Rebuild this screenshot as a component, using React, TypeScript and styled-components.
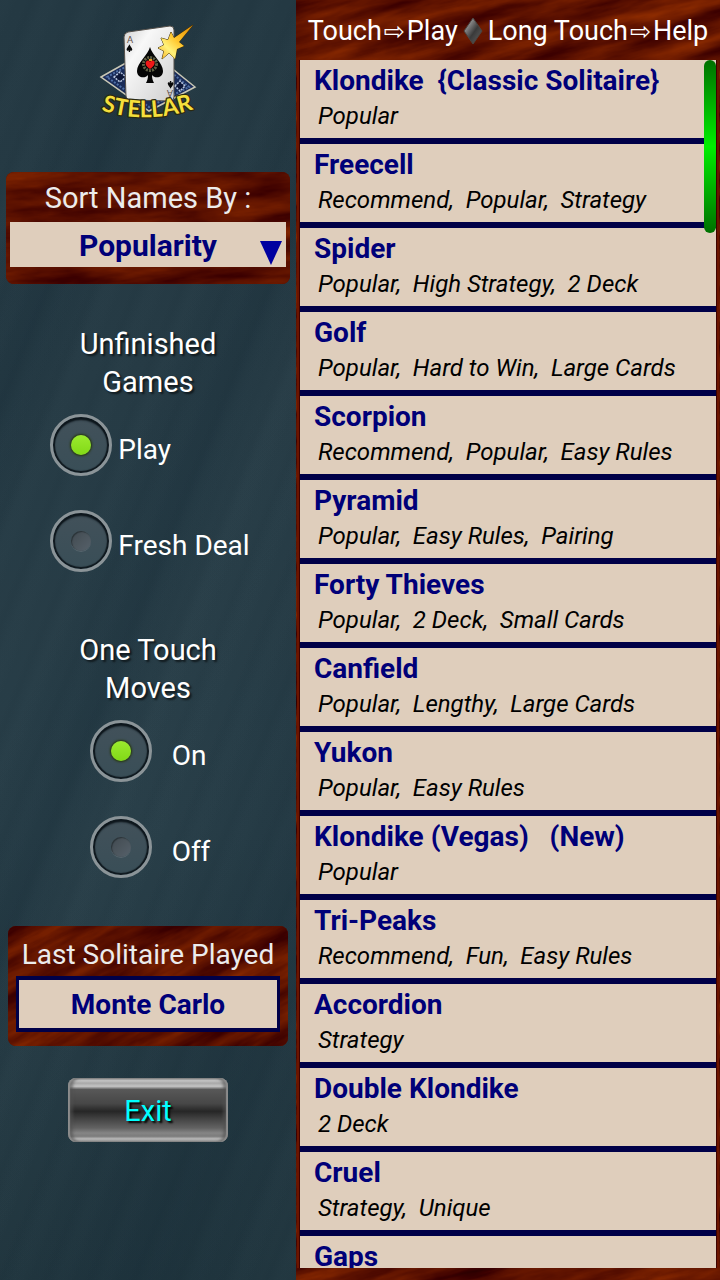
import React, { useState } from 'react';
import styled, { createGlobalStyle } from 'styled-components';

const GlobalStyle = createGlobalStyle`
  *, *::before, *::after { box-sizing: border-box; }
  body {
    margin: 0;
    background: #243943;
    font-family: Roboto, "Liberation Sans", sans-serif;
  }
  button, select { font: inherit; }
`;

const color = {
  cream: '#dfcebc',
  navy: '#000078',
  line: '#000048',
  label: '#ececec',
};

const Screen = styled.div`
  display: grid;
  grid-template-columns: 37fr 53fr;
  height: 100vh;
  overflow: hidden;
`;

const Sidebar = styled.aside`
  display: flex;
  flex-direction: column;
  align-items: center;
  min-width: 0;
  padding: 10px 6px;
  background:
    linear-gradient(112deg, transparent 12%, rgba(14, 34, 46, 0.2) 20%, transparent 27%, transparent 38%, rgba(14, 34, 46, 0.18) 47%, rgba(70, 92, 100, 0.06) 54%, transparent 62%, rgba(14, 34, 46, 0.22) 82%, transparent 96%),
    repeating-linear-gradient(112deg, rgba(80, 104, 114, 0.03) 0 7px, transparent 16px 23px, rgba(12, 28, 38, 0.04) 30px, rgba(80, 104, 114, 0.03) 41px),
    linear-gradient(180deg, #243943 0%, #263b45 30%, #283e48 65%, #21363f 100%);
`;

const Logo = styled.svg`
  display: block;
  flex: none;
  width: 120px;
  height: 120px;
`;

const WoodLayer = styled.svg`
  position: absolute;
  inset: 0;
  z-index: -1;
  width: 100%;
  height: 100%;
`;

const WoodPanel = styled.section<{ $inset: number; $top: number }>`
  position: relative;
  isolation: isolate;
  flex: none;
  align-self: stretch;
  display: flex;
  flex-direction: column;
  margin: ${p => p.$top}px ${p => p.$inset}px 0;
  border-radius: 8px;
  overflow: hidden;
  background: #5a1000;
`;

const PanelTitle = styled.label`
  display: block;
  padding-top: 2px;
  line-height: 48px;
  font-size: 29px;
  text-align: center;
  white-space: nowrap;
  color: ${color.label};
`;

const LastTitle = styled.h2`
  margin: 0;
  padding-top: 8px;
  line-height: 42px;
  font-size: 28px;
  font-weight: 400;
  text-align: center;
  white-space: nowrap;
  color: ${color.label};
`;

const SelectWrap = styled.div`
  position: relative;
  margin: 0 4px 17px;
`;

const SortSelect = styled.select`
  appearance: none;
  display: block;
  width: 100%;
  height: 45px;
  padding: 2px 0 0;
  border: 0;
  border-radius: 0;
  background: ${color.cream};
  color: ${color.navy};
  font-size: 30px;
  font-weight: 700;
  text-align: center;
  text-align-last: center;
`;

const SelectArrow = styled.svg`
  position: absolute;
  right: 4px;
  bottom: 2px;
  width: 22px;
  height: 24px;
  pointer-events: none;
`;

const LastButton = styled.button`
  height: 56px;
  margin: 0 8px 14px;
  padding: 0;
  border: solid ${color.line};
  border-width: 4px 3px;
  background: ${color.cream};
  color: ${color.navy};
  font-size: 28px;
  font-weight: 700;
`;

const Group = styled.fieldset<{ $top: number }>`
  flex: none;
  margin: ${p => p.$top}px 0 0;
  padding: 0;
  border: 0;
`;

const GroupTitle = styled.legend`
  width: 160px;
  margin: 0 auto 13px;
  padding: 0;
  line-height: 38px;
  font-size: 29px;
  text-align: center;
  color: #fff;
  text-shadow: 2px 2px 2px rgba(0, 0, 0, 0.6);
`;

const Options = styled.div`
  display: grid;
  justify-content: center;
  gap: 34px;
  padding-left: 4px;
`;

const Option = styled.label<{ $gap: number }>`
  display: flex;
  align-items: center;
  gap: ${p => p.$gap}px;
  font-size: 28px;
  color: #fff;
  white-space: nowrap;
`;

const OptionText = styled.span`
  padding-top: 8px;
`;

const Radio = styled.input`
  appearance: none;
  display: grid;
  place-items: center;
  width: 62px;
  height: 62px;
  margin: 0;
  border-radius: 50%;
  border: 3px solid #8b9498;
  background: linear-gradient(#42515a, #394e57) padding-box;
  box-shadow: inset 0 0 1px 2px #0e171d, inset 0 3px 2px #0e171d;

  &::before {
    content: "";
    width: 20px;
    height: 20px;
    border-radius: 50%;
    background: linear-gradient(135deg, #414a50, #56616a);
    box-shadow: inset 1px 1px 1px #2a3338, 0 1px 0 #56656d;
  }

  &:checked::before {
    background: linear-gradient(#9bea2e, #82d917);
    box-shadow: 0 0 2px 1px #28390f;
  }
`;

const ExitButton = styled.button`
  flex: none;
  width: 160px;
  height: 64px;
  margin-top: 32px;
  padding: 2px 0 0;
  border: 0;
  border-radius: 8px;
  background: linear-gradient(#9a9a9a 0, #c6c6c6 4%, #a8a8a8 8%, #c4c4c4 13%, #585858 18%, #505050 28%, #474747 40%, #262626 52%, #484848 66%, #626262 78%, #858585 86%, #7c7c7c 91%, #b8b8b8 95%, #a4a4a4 100%);
  box-shadow: inset 2px 0 1px #8c8c8c, inset -2px 0 1px #8c8c8c, inset 5px 0 3px rgba(80, 80, 80, 0.6), inset -5px 0 3px rgba(80, 80, 80, 0.6);
  color: #00ffff;
  font-size: 29px;
  text-shadow: 2px 2px 2px #000;
`;

const Main = styled.main`
  position: relative;
  isolation: isolate;
  display: flex;
  flex-direction: column;
  min-width: 0;
  min-height: 0;
  padding: 0 4px 12px;
  background: #5c1200;
`;

const Hint = styled.header`
  display: flex;
  align-items: center;
  justify-content: center;
  gap: 5px;
  height: 60px;
  padding-top: 2px;
  flex: none;
  margin: 0 -4px;
  font-size: 27px;
  white-space: nowrap;
  color: #fff;
`;

const Arrow = styled.span`
  font-family: "DejaVu Sans", sans-serif;
  font-size: 25px;
  margin: 0 2px;
`;

const Diamond = styled.svg`
  width: 20px;
  height: 28px;
`;

const ListFrame = styled.div`
  position: relative;
  flex: 1;
  min-height: 0;
  box-shadow: 0 0 0 1px #3c0200, 0 0 0 3px #6c1500;
  clip-path: inset(0 -4px 0 -4px);
`;

const GameList = styled.ul`
  height: 100%;
  margin: 0;
  padding: 0;
  overflow-y: auto;
  list-style: none;
  scrollbar-width: none;
  background: ${color.cream};
`;

const GameRow = styled.li`
  border-bottom: 6px solid ${color.line};
`;

const GameButton = styled.button`
  display: flex;
  flex-direction: column;
  width: 100%;
  height: 78px;
  padding: 4px 14px 0;
  border: 0;
  background: none;
  text-align: left;
  white-space: pre;
`;

const GameName = styled.span`
  line-height: 34px;
  font-size: 28px;
  font-weight: 700;
  color: ${color.navy};
`;

const GameTags = styled.span`
  padding-left: 4px;
  line-height: 36px;
  font-size: 24px;
  font-style: italic;
  color: #000;
`;

const ScrollThumb = styled.div`
  position: absolute;
  top: 0;
  right: 0;
  width: 12px;
  height: 173px;
  border-radius: 6px;
  background: linear-gradient(#007000, #00ee00 50%, #007000);
`;

function Wood({ id, seed, tilt }: { id: string; seed: number; tilt: number }) {
  return (
    <WoodLayer aria-hidden="true">
      <defs>
        <filter id={id} x="0" y="0" width="100%" height="100%" colorInterpolationFilters="sRGB">
          <feTurbulence type="fractalNoise" baseFrequency="0.01 0.055" numOctaves="5" seed={seed} />
          <feColorMatrix values="0.45 0 0 0 0.14  0.24 0 0 0 -0.05  0 0 0 0 0  0 0 0 0 1" />
        </filter>
      </defs>
      <g transform={`rotate(${tilt})`}>
        <rect x="-600" y="-400" width="1800" height="2400" filter={`url(#${id})`} />
      </g>
    </WoodLayer>
  );
}

function StellarLogo() {
  const spade =
    'M61 37 C63 45 74 53 74 61 C74 68 66 69 63 65 C63 69 64 71 65 73 L57 73 C58 71 59 69 59 65 C56 69 48 68 48 61 C48 53 59 45 61 37 Z';
  return (
    <Logo viewBox="-1 0 120 120" role="img" aria-label="Stellar">
      <defs>
        <linearGradient id="card" x1="0" y1="0" x2="1" y2="1">
          <stop offset="0" stopColor="#d0d0d0" />
          <stop offset="0.3" stopColor="#f8f8f8" />
          <stop offset="1" stopColor="#cfcfcf" />
        </linearGradient>
        <linearGradient id="flare" x1="1" y1="0" x2="0" y2="1">
          <stop offset="0" stopColor="#e08a00" />
          <stop offset="0.45" stopColor="#ffc52c" />
          <stop offset="0.7" stopColor="#fff27a" />
          <stop offset="1" stopColor="#f7a818" />
        </linearGradient>
        <path id="nameArc" d="M12 100 Q59 116 111 97" />
      </defs>
      <path d="M12 67 L60 40 L106 77 L60 101 Z" fill="#1a2c59" stroke="#c9c7b5" strokeWidth="1.5" />
      <path d="M18 67 L60 44 L100 77 L60 97 Z" fill="none" stroke="#4f6fa6" strokeWidth="2" strokeDasharray="2 1.5" />
      <path d="M25 67 l6 -5 6 5 -6 5 Z M86 76 l5 -5 5 5 -5 5 Z" fill="#0c1638" stroke="#b8c6df" strokeWidth="1.5" strokeDasharray="2 1" />
      <path d="M39 22 Q35 23 35 27 L37 86 Q37 90 41 90 L81 91 Q85 91 85 87 L85 20 Q85 16 81 16 Z" fill="url(#card)" stroke="#55504a" strokeWidth="1" />
      <path d={spade} fill="#050505" />
      <circle cx="61" cy="54" r="6.5" fill="none" stroke="#5f6045" strokeWidth="3" strokeDasharray="2 1" />
      <path d="M61 59 C57 56 56 54 57 52 C58 50 60 50 61 52 C62 50 65 50 65.500 52 C66 54 65 56 61 59 Z" fill="#f01818" />
      <path d="M60 49 h3 v2 h-3 Z" fill="#e39a20" />
      <text x="38" y="33" fontFamily="Lato, sans-serif" fontSize="9" fill="#5b4a44">A</text>
      <g transform="translate(27 26) scale(0.22)"><path d={spade} fill="#080808" /></g>
      <g transform="translate(95 87) rotate(180) scale(0.22)"><path d={spade} fill="#080808" /></g>
      <g transform="translate(84 80) rotate(180)">
        <text x="0" y="0" fontFamily="Lato, sans-serif" fontSize="9" fill="#5b4a44">A</text>
      </g>
      <path
        d="M104 15 L90 32 L95 36 L88 39 L86 49 L80 43 L73 49 L75 41 L69 38 L75 35 L72 28 L79 30 L82 22 L85 28 Z"
        fill="url(#flare)"
        stroke="#3a2a08"
        strokeWidth="1"
        strokeLinejoin="round"
        paintOrder="stroke"
      />
      <text
        fontFamily="Lato, sans-serif"
        fontSize="23"
        fontWeight="700"
        fill="#f5df3c"
        stroke="#2b2a10"
        strokeWidth="2.500"
        strokeLinejoin="round"
        paintOrder="stroke"
      >
        <textPath href="#nameArc">STELLAR</textPath>
      </text>
    </Logo>
  );
}

const games: [string, string[]][] = [
  ['Klondike  {Classic Solitaire}', ['Popular']],
  ['Freecell', ['Recommend', 'Popular', 'Strategy']],
  ['Spider', ['Popular', 'High Strategy', '2 Deck']],
  ['Golf', ['Popular', 'Hard to Win', 'Large Cards']],
  ['Scorpion', ['Recommend', 'Popular', 'Easy Rules']],
  ['Pyramid', ['Popular', 'Easy Rules', 'Pairing']],
  ['Forty Thieves', ['Popular', '2 Deck', 'Small Cards']],
  ['Canfield', ['Popular', 'Lengthy', 'Large Cards']],
  ['Yukon', ['Popular', 'Easy Rules']],
  ['Klondike (Vegas)   (New)', ['Popular']],
  ['Tri-Peaks', ['Recommend', 'Fun', 'Easy Rules']],
  ['Accordion', ['Strategy']],
  ['Double Klondike', ['2 Deck']],
  ['Cruel', ['Strategy', 'Unique']],
  ['Gaps', []],
];

interface ChoiceProps {
  title: string;
  name: string;
  choices: string[];
  top: number;
  gap: number;
}

function Choice({ title, name, choices, top, gap }: ChoiceProps) {
  const [value, setValue] = useState(choices[0]);
  return (
    <Group $top={top}>
      <GroupTitle>{title}</GroupTitle>
      <Options>
        {choices.map(choice => (
          <Option key={choice} $gap={gap}>
            <Radio type="radio" name={name} checked={value === choice} onChange={() => setValue(choice)} />
            <OptionText>{choice}</OptionText>
          </Option>
        ))}
      </Options>
    </Group>
  );
}

export default function App() {
  return (
    <>
      <GlobalStyle />
      <Screen>
        <Sidebar>
          <StellarLogo />
          <WoodPanel $inset={0} $top={42}>
            <Wood id="woodSort" seed={4} tilt={-4} />
            <PanelTitle htmlFor="sort">Sort Names By :</PanelTitle>
            <SelectWrap>
              <SortSelect id="sort" defaultValue="Popularity">
                <option>Popularity</option>
              </SortSelect>
              <SelectArrow viewBox="0 0 22 24" aria-hidden="true">
                <path d="M0 0 H22 L11 24 Z" fill="#0000a0" />
              </SelectArrow>
            </SelectWrap>
          </WoodPanel>
          <Choice title="Unfinished Games" name="unfinished" choices={['Play', 'Fresh Deal']} top={41} gap={6} />
          <Choice title="One Touch Moves" name="oneTouch" choices={['On', 'Off']} top={59} gap={20} />
          <WoodPanel $inset={2} $top={48}>
            <Wood id="woodLast" seed={9} tilt={-28} />
            <LastTitle>Last Solitaire Played</LastTitle>
            <LastButton type="button">Monte Carlo</LastButton>
          </WoodPanel>
          <ExitButton type="button">Exit</ExitButton>
        </Sidebar>
        <Main>
          <Wood id="woodMain" seed={15} tilt={-14} />
          <Hint>
            <span>Touch<Arrow>⇨</Arrow>Play</span>
            <Diamond viewBox="0 0 20 28" aria-hidden="true">
              <defs>
                <linearGradient id="gem" x1="0" y1="0" x2="1" y2="1">
                  <stop offset="0.2" stopColor="#9a9a9a" />
                  <stop offset="0.55" stopColor="#3a3a3a" />
                  <stop offset="1" stopColor="#666" />
                </linearGradient>
              </defs>
              <path d="M10 1 L19 14 L10 27 L1 14 Z" fill="url(#gem)" stroke="#4a4440" />
            </Diamond>
            <span>Long Touch<Arrow>⇨</Arrow>Help</span>
          </Hint>
          <ListFrame>
            <GameList>
              {games.map(([name, tags]) => (
                <GameRow key={name}>
                  <GameButton type="button">
                    <GameName>{name}</GameName>
                    <GameTags>{tags.join(',  ')}</GameTags>
                  </GameButton>
                </GameRow>
              ))}
            </GameList>
            <ScrollThumb />
          </ListFrame>
        </Main>
      </Screen>
    </>
  );
}
